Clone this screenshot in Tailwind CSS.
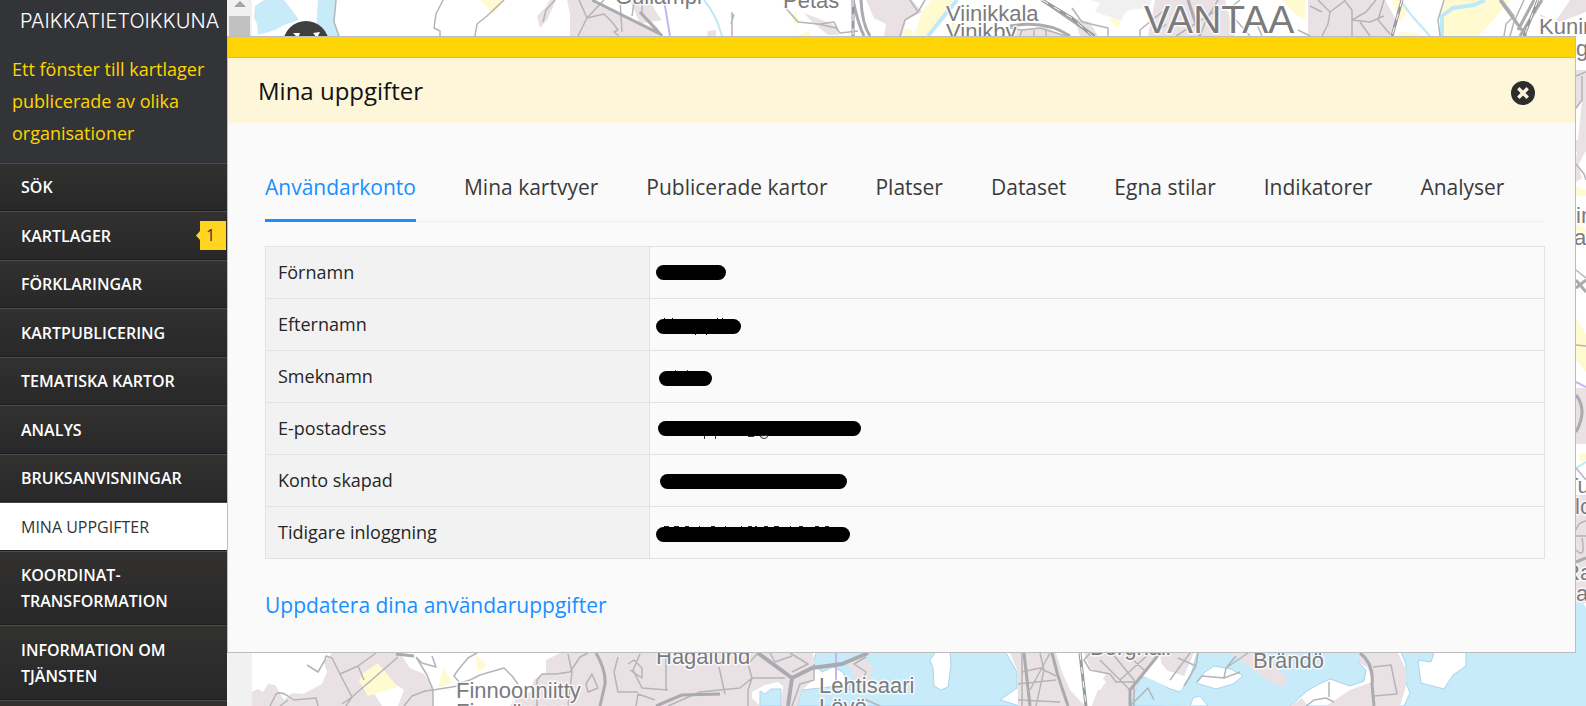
<!DOCTYPE html>
<html lang="sv">
<head>
<meta charset="utf-8">
<meta name="viewport" content="width=device-width, initial-scale=1">
<title>Paikkatietoikkuna – Mina uppgifter</title>
<script src="https://cdn.jsdelivr.net/npm/@tailwindcss/browser@4"></script>
</head>
<body class="flex h-screen overflow-hidden bg-white font-['Open_Sans',sans-serif]">

<aside class="w-[227px] shrink-0 overflow-hidden bg-[#333438]">
  <header class="h-[163px] pt-[7px]">
    <a href="#" class="block pl-5 font-['Inter',sans-serif] text-[20px] leading-[28px] font-light whitespace-nowrap text-white">PAIKKATIETOIKKUNA</a>
    <p class="mt-[18px] pr-4 pl-3 text-[18px] leading-[32px] text-[#ffd400]">Ett fönster till kartlager publicerade av olika organisationer</p>
  </header>
  <nav>
    <ul class="text-[16px] leading-[26px] font-semibold text-white [&>li]:border-t [&>li]:border-b [&>li]:border-t-[#4b4b4b] [&>li]:border-b-[#1d1d1d] [&>li]:bg-linear-to-b [&>li]:from-[#32312f] [&>li]:to-[#28282a] [&>li]:pt-[10px] [&>li]:pb-[10px] [&>li]:pl-[21px] [&>li:nth-child(even)]:pt-[11px]">
      <li><a href="#">SÖK</a></li>
      <li class="flex items-center justify-between"><a href="#">KARTLAGER</a>
        <span class="relative mr-px -mt-[5px] -mb-[3px] flex h-[29px] w-[26px] items-center bg-[#ffd522] pl-[6px] font-normal text-[#333]"><svg class="absolute top-[10px] -left-1" width="4" height="9" viewBox="0 0 4 9"><path d="M4 0v9L0 4.500z" fill="#ffd522"/></svg>1</span>
      </li>
      <li><a href="#">FÖRKLARINGAR</a></li>
      <li><a href="#">KARTPUBLICERING</a></li>
      <li><a href="#">TEMATISKA KARTOR</a></li>
      <li><a href="#">ANALYS</a></li>
      <li><a href="#">BRUKSANVISNINGAR</a></li>
      <li class="from-white! to-white! font-normal text-[#333438]"><a href="#" aria-current="page">MINA UPPGIFTER</a></li>
      <li><a href="#">KOORDINAT-<br>TRANSFORMATION</a></li>
      <li><a href="#">INFORMATION OM<br>TJÄNSTEN</a></li>
      <li><a href="#">&nbsp;</a></li>
    </ul>
  </nav>
</aside>

<main class="relative min-w-0 flex-1">
  <svg class="absolute inset-0 h-full w-full" viewBox="227 0 1359 706" preserveAspectRatio="xMinYMin slice" aria-hidden="true">
    <rect x="227" width="1359" height="706" fill="#fff"/>
    <!-- Water -->
    <g fill="#c8ebf9" stroke="#a9d3ee" stroke-width="1">
      <path stroke="none" d="M255 6L264 0H284L291 9L299 20L284 25L275 30L258 35L257 24L254 18Z"/>
      <path stroke="none" d="M318 0H335L334 22L339 36H324L316 30Z"/>
      <path d="M820 640L813 664L822 672L833 667L843 672L850 690L838 686L802 690L797 706H1020L1000 700L1017 688V672L1006 653L1000 640Z"/>
      <path d="M1130 706L1140 678L1154 675L1168 688L1180 692L1190 678L1197 653L1200 640H1590V710Z"/>
      <path d="M1576 603H1583L1586 608V653H1576Z" stroke="none"/>
    </g>
    <!-- Islands -->
    <g fill="#fff" stroke="#a9d3ee">
      <path d="M937 650H950L951 665L948 687L941 690L934 686L933 668L930 660Z"/>
      <path d="M1196 683L1205 672L1214 666L1231 669L1243 676L1233 684L1216 689Z"/>
      <path d="M1290 706L1307 691L1319 684L1330 679L1350 686L1364 681L1366 670L1358 662L1362 650H1400L1406 664L1405 680L1410 693L1404 706Z"/>
      <path d="M1418 660L1431 662L1435 650H1466V666L1453 675L1444 689L1421 683Z"/>
      <path d="M1190 706L1193 698L1200 696L1208 706Z"/>
    </g>
    <!-- Built-up areas -->
    <g fill="#eae1e5">
      <path d="M537 16L545 8L550 0H556L547 20L540 28Z"/>
      <path d="M567 0H590L618 12L640 22L658 30V36H570V14Z"/>
      <path d="M630 0H650L656 12L662 20L640 24Z"/>
      <path d="M708 31L716 30V36H707Z"/>
      <path d="M804 13L822 20L836 26L839 35H828L812 22Z"/>
      <path d="M866 0H912L922 12L906 20L902 36H884L886 24L874 18Z"/>
      <path d="M1015 30L1045 27L1064 36H1015Z"/>
      <path d="M1074 18L1090 22L1098 36H1080Z"/>
      <path d="M1155 0H1225L1235 36H1148Z"/>
      <path d="M1308 0H1385L1396 20L1390 36H1308Z"/>
      <path d="M1540 0H1586V12L1560 22L1540 16Z"/>
      <path d="M1576 70H1586V150L1576 170V160L1582 100L1576 110Z"/>
      <path d="M1576 140H1586V152H1576Z M1576 160L1582 178L1576 182Z"/>
      <path d="M1576 388H1586V444H1576Z M1576 495H1586V603H1576Z"/>
      <path d="M252 692L258 689L263 692L268 684L275 685L284 700L292 693L303 694L322 684L327 672L324 662L332 653H400L410 668L424 674L433 686V706H252Z"/>
      <path d="M510 706L518 696L530 692L534 680L546 672V660L560 653H813L815 668L812 681L802 690L797 706Z"/>
      <path d="M846 660L864 657L873 668L868 684L855 678Z"/>
      <path d="M1010 653H1056L1062 672L1070 690L1085 706H1018L1017 670Z"/>
      <path d="M1084 653H1160L1140 678L1130 706H1092L1100 684L1106 674L1090 668Z"/>
      <path d="M1160 653H1194L1184 676L1172 672L1162 670Z"/>
      <path d="M1230 653H1260L1287 677L1285 686L1276 685L1262 676Z"/>
      <path d="M1360 653H1398L1406 670V686L1400 706H1326L1350 690L1372 682L1368 668L1358 662Z"/>
      <path d="M1290 706L1302 698L1308 706Z"/>
    </g>
    <g fill="#fff">
      <path d="M1478 0H1570L1555 22L1540 14L1520 28L1480 30Z"/>
      <path d="M752 692L765 685L778 682L783 686L781 706H760L752 698Z"/>
      <path d="M1062 653H1082L1080 667L1098 674L1106 682L1100 690L1086 690L1070 680Z"/>
      <path d="M1144 676L1160 662L1170 674L1180 676L1182 690L1170 688Z"/>
      <path d="M372 690L395 684L404 690L398 706H382Z"/>
    </g>
    <path fill="#c8ebf9" stroke="#a9d3ee" d="M760 691L765 694L771 689H781V706H760Z"/>
    <!-- Fields -->
    <g fill="#fffad0">
      <path d="M480 0H505L493 14L485 5Z"/>
      <path d="M795 12L800 22L796 26L791 16Z M797 36L808 31L812 36Z"/>
      <path d="M932 0H952L948 14L936 24L925 36H914L922 12Z"/>
      <path d="M903 28L912 30L913 36H904Z"/>
      <path d="M952 22L962 27L958 36H950Z"/>
      <path d="M1124 0L1136 4L1124 14L1118 28L1110 20Z"/>
      <path d="M1282 0H1305V20L1295 14Z"/>
      <path d="M1392 0H1400L1408 12L1400 22Z M1445 0H1510L1488 26L1478 36H1445L1440 18Z"/>
      <path d="M1400 32L1420 33V36H1398Z"/>
      <path d="M1576 186L1586 190V196H1576Z M1576 222L1586 230V236L1576 234Z M1576 318L1586 334V372L1576 360Z"/>
      <path d="M363 673L378 663L398 687L368 696L359 681Z"/>
      <path d="M475 655L484 662L486 667L478 671Z M444 667L452 683L438 688Z"/>
      <circle cx="1583" cy="457" r="4"/>
    </g>
    <path d="M1090 0L1100 3L1095 12L1120 20L1128 10L1148 8L1152 0Z" fill="#f0f0f0"/>
    <!-- Streams and boundaries -->
    <g fill="none" stroke="#bfe8f8" stroke-width="2">
      <path d="M704 0Q716 14 722 36"/>
      <path stroke-width="4" d="M957 0L944 16L928 36"/>
      <path d="M1400 0L1412 16L1430 36"/>
      <path stroke-width="4" d="M1442 36V16L1453 8L1474 5L1485 0"/>
      <path d="M1576 468L1586 462"/>
    </g>
    <g fill="none" stroke="#c3b7f2" stroke-width="2">
      <path d="M664 0L670 36M836 653V692M1576 382L1586 387"/>
    </g>
    <!-- Minor roads -->
    <g fill="none" stroke="#b3b5b8" stroke-width="1.500" stroke-linejoin="round">
      <path d="M336 0L334 22L339 36"/>
      <path d="M443 0L436 14L434 28L440 31V36M504 0L487 16L477 24L475 36M555 0L546 10L543 22"/>
      <path d="M579 0L587 18L578 36M604 0L587 18L604 14L612 22L618 30L614 32L619 36M620 0L622 32M642 0V14L658 30M634 2L632 16"/>
      <path d="M732 12V36M734 14L731 24M784 6L798 22L818 24L836 28L840 33L858 31M820 24L834 22L838 30M910 0L918 12L905 20L900 36M925 0L918 12"/>
      <path d="M1010 28L1022 30L1040 28L1066 36M1022 30L1020 36M1034 30V36M1046 30V36M1072 8L1082 22L1108 28V36"/>
      <path d="M1140 36V30L1152 20L1170 6M1160 30L1166 24M1176 36L1220 8M1200 36L1206 20L1218 0M1230 8L1240 0M1236 20L1250 36M1262 36L1256 22M1298 30L1310 36"/>
      <path d="M1318 0L1330 12L1328 24L1322 36M1330 12L1346 0M1344 0L1352 10V36M1352 20L1370 22L1384 16M1360 22L1370 36M1376 0L1366 12L1352 20M1384 0L1378 20L1390 34M1310 6L1322 12M1444 0L1438 20L1440 36"/>
      <path d="M1502 0L1514 16L1506 24L1504 36M1524 0L1514 22L1510 36"/>
      <path d="M1576 164L1584 174L1586 180M1576 270L1586 278M1576 345L1586 346M1576 76L1586 72M1582 76V100L1576 108M1576 468L1586 480M1576 530Q1578 522 1586 521M1576 536H1586M1576 550Q1586 560 1582 538"/>
      <path d="M307 665L318 672L325 660L326 656L332 658L340 674L358 666L376 653M340 674L352 697L398 657M358 666L364 680M352 697L342 704M270 706L276 694Q281 691 288 696L294 700L316 698L318 706M288 700L280 706M416 657L427 675L433 690V706M416 657L422 663L436 667L432 656M352 697L346 706M404 706L412 696L425 691L433 690L458 686"/>
      <path d="M477 653L468 658L458 670L454 676L460 683L470 680L480 675L504 668L512 676L518 684M537 706V680L542 674H556L570 672L580 657L588 653M568 654L572 672L568 706M592 674L598 688L588 692L586 684ZM618 657L614 672L618 692L638 692M640 654L633 670L642 688L668 690M666 653V690M628 664L634 660L642 668V678L630 670M636 706L638 694L655 700"/>
      <path d="M668 706L700 692L740 688L752 678H785M719 667L725 694M752 678L748 664L758 653M752 678L748 690V706M770 653L775 662L792 656M790 653L808 664L792 672M814 664V680L800 684L792 706M866 657L854 664L866 672L862 682L850 684M862 698L880 706"/>
      <path d="M1022 653V706M1022 672L1040 668L1056 676M1040 653L1044 670L1036 706M1050 653L1030 690M1056 680L1018 684M1018 700L1060 702M1090 653L1084 660L1090 670L1110 674L1116 682L1134 682M1112 653L1134 680V706M1100 660L1130 690M1126 653L1146 672M1150 653L1120 680M1130 706L1148 688L1154 700"/>
      <path d="M1170 680L1190 653M1178 658L1196 666L1198 653M1196 666L1184 686M1197 682L1202 676L1224 678L1226 668L1248 653M1226 668L1236 656M1224 678L1240 672M1306 706L1314 700L1326 698L1334 702M1329 682V697M1373 667L1391 665L1397 694L1374 696"/>
    </g>
    <!-- Main roads -->
    <g fill="none" stroke="#a9abae" stroke-width="3" stroke-linejoin="round">
      <path d="M592 0L660 34M640 12L662 36"/>
      <path d="M853 0Q858 24 864 36M861 0Q862 24 870 36" stroke-width="3"/>
      <path d="M1010 26Q1046 20 1070 36M1042 0L1080 26L1095 36"/>
      <path d="M1188 0L1200 36M1500 0L1516 22L1526 36M1534 0L1518 30M1542 0L1526 26L1520 36" />
      <path d="M1576 288L1586 280M1576 280L1586 292M1576 395Q1588 410 1576 432M1576 562L1586 558"/>
      <path d="M396 654L414 656M596 653Q606 670 605 684L600 706M656 706L682 695L720 694"/>
      <path d="M758 653L792 678L788 706M792 678L812 668L842 664L868 653" stroke-width="4"/>
      <path d="M1024 653L1030 706M1052 653L1058 676L1068 706M1160 653L1130 690V706M1360 653Q1374 664 1372 684L1374 706"/>
    </g>
    <!-- Railways -->
    <g fill="none" stroke="#98999c" stroke-width="3">
      <path d="M853 0V36M1402 0L1392 36M1042 0L1072 18L1092 36M1080 653L1086 706M1538 0L1524 36"/>
      <path d="M853 0V36M1402 0L1392 36M1042 0L1072 18L1092 36M1080 653L1086 706M1538 0L1524 36" stroke="#fff" stroke-width="1" stroke-dasharray="7 7"/>
    </g>
    <!-- Place names -->
    <g class="font-['Liberation_Sans',sans-serif] text-[22px]" fill="#7b7b7d" stroke="#fff" stroke-width="3" stroke-opacity=".8" paint-order="stroke" stroke-linejoin="round">
      <text x="615" y="4">Gullampi</text>
      <text x="783" y="8">Petas</text>
      <text x="946" y="21">Viinikkala</text>
      <text x="946" y="39">Vinikby</text>
      <text x="1144" y="33" class="text-[39px]">VANTAA</text>
      <text x="1539" y="34">Kunin</text>
      <text x="1576" y="56">gi</text>
      <text x="1576" y="223">in</text>
      <text x="1574" y="245">an</text>
      <text x="1565" y="493">Tu</text>
      <text x="1575" y="514">lo</text>
      <text x="1564" y="580">Ra</text>
      <text x="1576" y="601">a</text>
      <text x="656" y="664">Hagalund</text>
      <text x="456" y="698">Finnoonniitty</text>
      <text x="456" y="719">Finnoängen</text>
      <text x="819" y="693">Lehtisaari</text>
      <text x="819" y="714">Lövö</text>
      <text x="1090" y="655">Berghäll</text>
      <text x="1253" y="668">Brändö</text>
    </g>
    <!-- Map control -->
    <circle cx="306" cy="44" r="23" fill="#3f3f3f"/>
    <path d="M293 33L300 33L298 38ZM313 33L320 32L317 38Z" fill="#fff"/>
  </svg>

  <div class="absolute inset-y-0 left-0 w-[25px] bg-[#f1f1f1]" aria-hidden="true">
    <svg class="mx-auto mt-px" width="12" height="6" viewBox="0 0 12 6"><path d="M6 0L12 6H0Z" fill="#a3a3a3"/></svg>
    <div class="mx-auto mt-[9px] h-[60px] w-[21px] bg-[#c1c1c1]"></div>
  </div>

  <section class="relative mt-9 mr-[10px] border border-[#bdbdbd] bg-[#fafafa]" role="dialog" aria-labelledby="dialog-title">
    <div class="h-[21px] border-b border-[#ebc300] bg-[#ffd404]"></div>
    <header class="flex h-[65px] items-center justify-between bg-[#fdf6d9] pr-[40px] pl-[30px]">
      <h1 id="dialog-title" class="text-[24px] leading-[32px] font-normal text-[#111]">Mina uppgifter</h1>
      <button type="button" aria-label="Stäng" class="mt-[4px]">
        <svg class="block" width="24" height="24" viewBox="0 0 24 24"><circle cx="12" cy="12" r="12" fill="#2d2d2d"/><path d="M8.500 8.500L15.500 15.500M15.500 8.500L8.500 15.500" stroke="#fdf6d9" stroke-width="3.400" stroke-linecap="square"/></svg>
      </button>
    </header>

    <div class="pt-[30px] pr-[30px] pb-[33px] pl-[37px]">
      <div role="tablist" class="flex gap-12 border-b border-[#f0f0f0] text-[21px] leading-[28px] whitespace-nowrap text-[#3a3a3a] [&>button]:-mb-px [&>button]:border-b-3 [&>button]:border-transparent [&>button]:pt-5 [&>button]:pb-[18px]">
        <button role="tab" aria-selected="true" type="button" class="border-[#1890ff]! text-[#1890ff]">Användarkonto</button>
        <button role="tab" aria-selected="false" type="button">Mina kartvyer</button>
        <button role="tab" aria-selected="false" type="button">Publicerade kartor</button>
        <button role="tab" aria-selected="false" type="button">Platser</button>
        <button role="tab" aria-selected="false" type="button">Dataset</button>
        <button role="tab" aria-selected="false" type="button">Egna stilar</button>
        <button role="tab" aria-selected="false" type="button">Indikatorer</button>
        <button role="tab" aria-selected="false" type="button">Analyser</button>
      </div>

      <table class="mt-6 w-full table-fixed border-collapse text-left text-[18px] leading-[24px] text-[#262626] [&_td]:border [&_td]:border-[#e3e3e3] [&_td]:pb-[2px] [&_td]:pl-[6px] [&_th]:w-[30%] [&_th]:border [&_th]:border-[#e3e3e3] [&_th]:bg-[#f2f2f2] [&_th]:pb-[2px] [&_th]:pl-3 [&_th]:font-normal [&_tr]:h-[52px]">
        <tbody>
          <tr><th scope="row">Förnamn</th><td><svg class="block" width="210" height="24" role="img" aria-label="Dolt värde"><rect x="0" y="5" width="70" height="15" rx="7.500"/></svg></td></tr>
          <tr><th scope="row">Efternamn</th><td><svg class="block" width="210" height="24" role="img" aria-label="Dolt värde"><rect x="0" y="7" width="85" height="15" rx="7.500"/><path d="M8 6.500h1M16 6.500h1M61 6.500h1M66 6.500h1M39 22.500h1M50 22.500h1" stroke="#000"/></svg></td></tr>
          <tr><th scope="row">Smeknamn</th><td><svg class="block" width="210" height="24" role="img" aria-label="Dolt värde"><rect x="3" y="7" width="53" height="15" rx="7.500"/><path d="M19 6.500h1M31 6.500h1" stroke="#444"/></svg></td></tr>
          <tr><th scope="row">E-postadress</th><td><svg class="block" width="210" height="24" role="img" aria-label="Dolt värde"><rect x="2" y="5" width="203" height="15" rx="7.500"/><path d="M48.500 20v3M59.500 20v3M104 20q8 -1 8 0q-1 2.500 -4 2.500q-3 0 -4 -2.500M92 20.500h6" fill="none" stroke="#333"/></svg></td></tr>
          <tr><th scope="row">Konto skapad</th><td><svg class="block" width="210" height="24" role="img" aria-label="Dolt värde"><rect x="4" y="6" width="187" height="15" rx="7.500"/></svg></td></tr>
          <tr><th scope="row">Tidigare inloggning</th><td><svg class="block" width="210" height="24" role="img" aria-label="Dolt värde"><rect x="0" y="7" width="194" height="15" rx="7.500"/><path d="M8 6.500h5M18 6.500h5M29 6.500h4M43 6.500h1M55 6.500h4M69 6.500h1M85 6.500h1M92 6.500h4M99 6.500h2M108 6.500h4M118 6.500h5M134 6.500h1M143 6.500h4M159 6.500h4M169 6.500h4" stroke="#222"/></svg></td></tr>
        </tbody>
      </table>

      <a href="#" class="mt-8 inline-block text-[21px] leading-[28px] text-[#1890ff]">Uppdatera dina användaruppgifter</a>
    </div>
  </section>
</main>
</body>
</html>
